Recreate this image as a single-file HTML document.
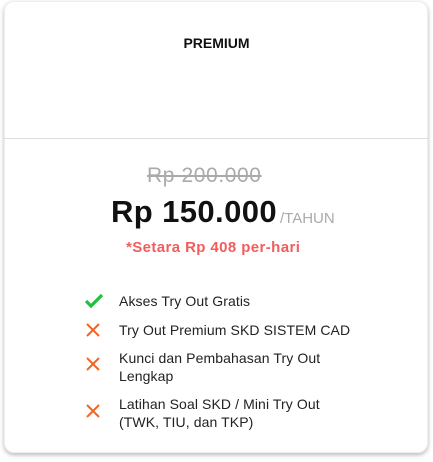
<!DOCTYPE html>
<html><head><style>
*{margin:0;padding:0;box-sizing:border-box}
body{width:433px;height:462px;background:#fff;font-family:"Liberation Sans",sans-serif;position:relative;overflow:hidden}
.card{position:absolute;left:4px;top:1px;width:424px;height:452px;border-radius:10px;background:#fff;box-shadow:0 2px 5px rgba(0,0,0,.28);border:1px solid #eee}
.t{position:absolute;white-space:nowrap}
.hr{position:absolute;left:4px;width:424px;top:138px;height:1px;background:#ddd}
.li{position:absolute;left:119px;font-size:14px;color:#222;line-height:18px;letter-spacing:.1px}
svg{position:absolute}
</style></head><body>
<div class="card"></div>
<div class="t" style="left:0;width:433px;text-align:center;top:35px;font-size:14px;font-weight:bold;color:#111">PREMIUM</div>
<div class="hr"></div>
<div class="t" style="left:147px;top:164px;font-size:21px;letter-spacing:.6px;color:#aaa;text-decoration:line-through;text-decoration-thickness:2px">Rp 200.000</div>
<div class="t" style="left:111px;top:194px;font-size:31px;letter-spacing:.4px;font-weight:bold;color:#111">Rp 150.000</div>
<div class="t" style="left:280px;top:210px;font-size:15px;color:#aaa">/TAHUN</div>
<div class="t" style="left:126px;top:239px;font-size:15px;letter-spacing:.4px;font-weight:bold;color:#f25c5c">*Setara Rp 408 per-hari</div>
<svg style="left:84px;top:293px" width="20" height="16" viewBox="0 0 20 16"><path d="M2 8l5 5L18 2" fill="none" stroke="#1fc23a" stroke-width="3.2"/></svg>
<svg style="left:86px;top:323px" width="14" height="14" viewBox="0 0 14 14"><path d="M1 1l12 12M13 1L1 13" stroke="#f26522" stroke-width="2"/></svg>
<svg style="left:86px;top:357px" width="14" height="14" viewBox="0 0 14 14"><path d="M1 1l12 12M13 1L1 13" stroke="#f26522" stroke-width="2"/></svg>
<svg style="left:86px;top:404px" width="14" height="14" viewBox="0 0 14 14"><path d="M1 1l12 12M13 1L1 13" stroke="#f26522" stroke-width="2"/></svg>
<div class="li" style="top:292px">Akses Try Out Gratis</div>
<div class="li" style="top:321px">Try Out Premium SKD SISTEM CAD</div>
<div class="li" style="top:349px">Kunci dan Pembahasan Try Out<br>Lengkap</div>
<div class="li" style="top:395px">Latihan Soal SKD / Mini Try Out<br>(TWK, TIU, dan TKP)</div>
</body></html>
